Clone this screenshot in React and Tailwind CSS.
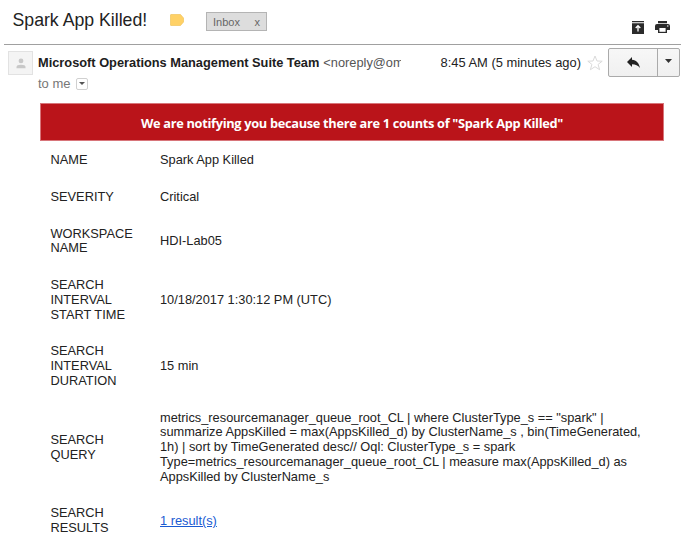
const rows = [
  { label: ['NAME'], value: ['Spark App Killed'] },
  { label: ['SEVERITY'], value: ['Critical'] },
  { label: ['WORKSPACE', 'NAME'], value: ['HDI-Lab05'] },
  { label: ['SEARCH', 'INTERVAL', 'START TIME'], value: ['10/18/2017 1:30:12 PM (UTC)'] },
  { label: ['SEARCH', 'INTERVAL', 'DURATION'], value: ['15 min'] },
  {
    label: ['SEARCH', 'QUERY'],
    value: [
      'metrics_resourcemanager_queue_root_CL | where ClusterType_s == "spark" |',
      'summarize AppsKilled = max(AppsKilled_d) by ClusterName_s , bin(TimeGenerated,',
      '1h) | sort by TimeGenerated desc// Oql: ClusterType_s = spark',
      'Type=metrics_resourcemanager_queue_root_CL | measure max(AppsKilled_d) as',
      'AppsKilled by ClusterName_s',
    ],
  },
  { label: ['SEARCH', 'RESULTS'], value: ['1 result(s)'], link: true },
];

function Subject() {
  return (
    <div className="ml-1 flex h-[45px] w-[677px] items-start border-b-[1.5px] border-[#a0a0a0]">
      <h1 className="ml-[8.5px] mt-[8px] w-[157.5px] whitespace-nowrap text-[17.7px] leading-6 text-[#222]">Spark App Killed!</h1>
      <svg className="mt-[14px] h-3 w-[14px]" viewBox="0 0 14 12">
        <path d="M1 .5H10.5L13.5 4V8L10.5 11.5H1Q.5 11.5 .5 11V1Q.5 .5 1 .5Z" fill="#ffd166" stroke="#f0c45c" strokeWidth=".7" />
      </svg>
      <div className="ml-[22px] mt-3 flex h-[19px] w-[61px] items-center justify-between border border-[#b4b4b4] bg-[#ddd] pl-1.5 pr-1.5 pt-px text-[11px] text-[#666]">
        <span>Inbox</span>
        <span>x</span>
      </div>
      <svg className="ml-auto mt-[21px] h-[13px] w-3" viewBox="0 0 12 13">
        <path d="M0 0H12V1.3H0ZM0 2.2H12V13H0Z" fill="#2b2b2b" />
        <path d="M6 10.5V5M3.7 7L6 4.7L8.3 7" fill="none" stroke="#fff" strokeWidth="1.3" />
      </svg>
      <svg className="ml-[11px] mr-[11px] mt-[21px] h-3 w-[15px]" viewBox="0 0 15 12">
        <path d="M3 0H12V2.2H3ZM2 3H13Q15 3 15 5V9H12V12H3V9H0V5Q0 3 2 3Z" fill="#2b2b2b" />
        <path d="M4.4 7H10.6V10.8H4.4Z" fill="#fff" />
        <circle cx="12.8" cy="5" r=".7" fill="#fff" />
      </svg>
    </div>
  );
}

function Sender() {
  return (
    <div className="flex h-[58px] items-start pl-2 pt-[3px]">
      <div className="mt-[3px] flex h-6 w-[25px] items-center justify-center border border-[#e2e2e2] bg-[#f4f4f4]">
        <svg className="h-[11px] w-[10px]" viewBox="0 0 10 11">
          <circle cx="5" cy="2.9" r="2.4" fill="#c8c8c8" />
          <path d="M.5 10.2V9Q.5 6.7 5 6.7T9.5 9V10.2Z" fill="#c8c8c8" />
        </svg>
      </div>
      <div className="ml-[5px] w-[363px] pt-[6px]">
        <div className="flex gap-1 overflow-hidden whitespace-nowrap text-[12.8px] leading-[17px]">
          <span className="font-bold text-[#202020]">Microsoft Operations Management Suite Team</span>
          <span className="text-[#555]">&lt;noreply@om</span>
        </div>
        <div className="mt-[4px] flex items-center text-[13px] leading-[17px] text-[#777]">
          to me
          <span className="ml-[5px] flex h-3 w-3 items-center justify-center rounded-xs border border-[#d0d0d0]">
            <svg className="h-[3px] w-1.5" viewBox="0 0 6 3"><path d="M0 0H6L3 3Z" fill="#555" /></svg>
          </span>
        </div>
      </div>
      <span className="ml-[39.5px] mt-[6px] w-[146.5px] whitespace-nowrap text-[12.9px] leading-[17px] text-[#222]">8:45 AM (5 minutes ago)</span>
      <svg className="mt-[7px] h-4 w-4" viewBox="0 0 16 16">
        <path d="M8 1L10 6L15.2 6.2L11.1 9.4L12.6 14.7L8 11.7L3.4 14.7L4.9 9.4L.8 6.2L6 6Z" fill="#fff" stroke="#dadada" strokeWidth="1" />
      </svg>
      <div className="ml-[5px] flex h-[29px] w-[72px] rounded-xs border-[1.5px] border-[#aaa] bg-gradient-to-b from-[#f7f7f7] to-[#f0f0f0]">
        <div className="flex w-[49px] items-center justify-center border-r border-[#aaa]">
          <svg className="h-[11px] w-[13px]" viewBox="0 0 13 11">
            <path d="M5 0V2.7C9.5 3.1 12 6 13 11C11 8.4 8.5 7.3 5 7.3V10L0 5Z" fill="#222" />
          </svg>
        </div>
        <div className="flex flex-1 items-center justify-center pb-[3px]">
          <svg className="h-1 w-[7px]" viewBox="0 0 7 4"><path d="M0 0H7L3.5 4Z" fill="#333" /></svg>
        </div>
      </div>
    </div>
  );
}

function Lines({ lines, link }) {
  return lines.map((line) => (
    <div key={line} className={link ? 'text-[#1a5ad2] underline' : ''}>{line}</div>
  ));
}

export default function App() {
  return (
    <main className="h-[545px] w-[686px] overflow-hidden bg-white font-['Liberation_Sans',Arial,sans-serif]">
      <Subject />
      <Sender />
      <section className="ml-10 w-[624px] text-[12.8px] leading-[14.75px] text-[#222]">
        <h2 className="flex h-[38px] items-center justify-center border border-[#d8757a] bg-[#ba141a] pt-[2px] font-['Open_Sans',sans-serif] text-[12.8px] font-bold tracking-[-0.31px] text-white">
          <span className="whitespace-nowrap">We are notifying you because there are 1 counts of "Spark App Killed"</span>
        </h2>
        <dl className="pt-[1.2px]">
          {rows.map((row) => (
            <div key={row.label.join(' ')} className="flex items-center whitespace-nowrap py-[11px] pl-[10.5px]">
              <dt className="w-[109.5px]"><Lines lines={row.label} /></dt>
              <dd><Lines lines={row.value} link={row.link} /></dd>
            </div>
          ))}
        </dl>
      </section>
    </main>
  );
}
